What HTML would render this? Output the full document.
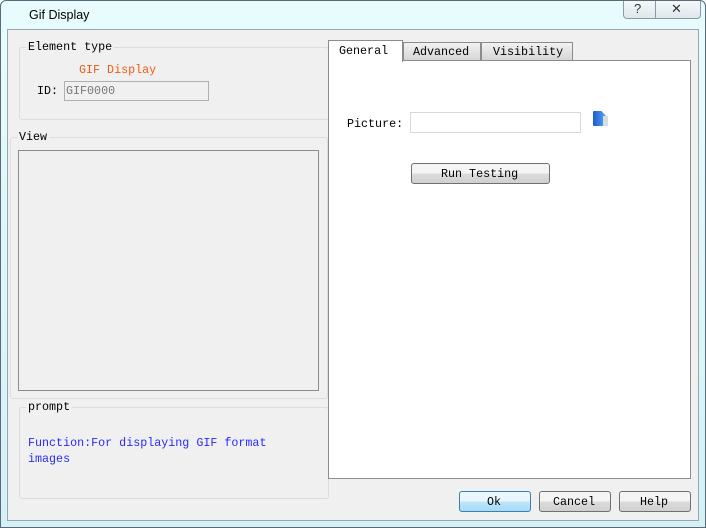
<html><head><style>
body{margin:0;width:706px;height:528px;background:#fff;position:relative;overflow:hidden;font-family:"Liberation Mono","Noto Sans CJK SC",monospace;font-size:11.7px;color:#000}
div{position:absolute;box-sizing:border-box}
.t{white-space:nowrap;line-height:14px}
</style></head><body>
<div style="left:0;top:0;width:706px;height:528px;border:1px solid #5a6a78;border-radius:6px 6px 0 0;background:linear-gradient(#e8fcfe,#d4f1f6)"></div>
<div class="t" style="left:29px;top:8px;font-family:'Liberation Sans',sans-serif;font-size:12.5px">Gif Display</div>
<div style="left:623px;top:1px;width:78px;height:18px;border:1px solid #8a99a6;border-top:none;border-radius:0 0 4px 4px;background:linear-gradient(#f4f8fa,#dfe8ec)"></div>
<div style="left:655px;top:1px;width:1px;height:17px;background:#8a99a6"></div>
<div class="t" style="left:634px;top:2px;font-family:'Liberation Sans';font-size:13px;color:#333">?</div>
<div class="t" style="left:671px;top:2px;font-family:'Liberation Sans';font-size:13px;color:#333">✕</div>
<div style="left:7px;top:29px;width:692px;height:492px;background:#f0f0f0;border:1px solid #9aa5ad"></div>
<!-- element type -->
<div style="left:19px;top:47px;width:310px;height:73px;border:1px solid #dcdcdc;border-radius:3px"></div>
<div class="t" style="left:26px;top:40px;background:#f0f0f0;padding:0 2px">Element type</div>
<div class="t" style="left:79px;top:63px;color:#f05a14">GIF Display</div>
<div class="t" style="left:37px;top:84px">ID:</div>
<div style="left:64px;top:81px;width:145px;height:20px;border:1px solid #b0b0b0;background:#f0f0f0"></div>
<div class="t" style="left:66px;top:84px;color:#777">GIF0000</div>
<!-- view -->
<div style="left:10px;top:137px;width:318px;height:262px;border:1px solid #dcdcdc;border-radius:3px"></div>
<div class="t" style="left:17px;top:130px;background:#f0f0f0;padding:0 2px">View</div>
<div style="left:18px;top:150px;width:301px;height:241px;border:1px solid #8c8c8c"></div>
<!-- prompt -->
<div style="left:19px;top:407px;width:310px;height:92px;border:1px solid #dcdcdc;border-radius:3px"></div>
<div class="t" style="left:26px;top:400px;background:#f0f0f0;padding:0 2px">prompt</div>
<div class="t" style="left:28px;top:436px;color:#2a2aff;line-height:15.5px">Function:For displaying GIF format<br>images</div>
<!-- tabs -->
<div style="left:328px;top:60px;width:363px;height:419px;background:#fff;border:1px solid #8c8c8c"></div>
<div style="left:403px;top:42px;width:78px;height:19px;border:1px solid #8c8c8c;background:linear-gradient(#f2f2f2,#d6d6d6)"></div>
<div style="left:481px;top:42px;width:92px;height:19px;border:1px solid #8c8c8c;background:linear-gradient(#f2f2f2,#d6d6d6)"></div>
<div style="left:328px;top:40px;width:75px;height:22px;border:1px solid #8c8c8c;border-bottom:none;background:#fff"></div>
<div class="t" style="left:339px;top:44px">General</div>
<div class="t" style="left:413px;top:45px">Advanced</div>
<div class="t" style="left:493px;top:45px">Visibility</div>
<div class="t" style="left:347px;top:117px">Picture:</div>
<div style="left:410px;top:112px;width:171px;height:21px;border:1px solid #d8d8d8;background:#fff"></div>
<div style="left:593px;top:111px;width:14px;height:15px;background:linear-gradient(90deg,#1a5fd0,#5fa8f0);border-radius:1px;clip-path:polygon(0 0,60% 0,100% 40%,100% 100%,0 100%)"></div>
<div style="left:603px;top:116px;width:5px;height:10px;background:#d8dde2"></div>
<div style="left:411px;top:163px;width:139px;height:21px;border:1px solid #707070;border-radius:3px;background:linear-gradient(#f4f4f4 50%,#dcdcdc 50%,#d0d0d0)"></div>
<div class="t" style="left:441px;top:167px">Run Testing</div>
<!-- buttons -->
<div style="left:459px;top:491px;width:72px;height:21px;border:1px solid #3c7fb1;border-radius:3px;background:linear-gradient(#eaf6fd 50%,#bee6fd 50%,#a7d9f5)"></div>
<div class="t" style="left:487px;top:495px">Ok</div>
<div style="left:539px;top:491px;width:72px;height:21px;border:1px solid #707070;border-radius:3px;background:linear-gradient(#f4f4f4 50%,#dcdcdc 50%,#d0d0d0)"></div>
<div class="t" style="left:553px;top:495px">Cancel</div>
<div style="left:619px;top:491px;width:72px;height:21px;border:1px solid #707070;border-radius:3px;background:linear-gradient(#f4f4f4 50%,#dcdcdc 50%,#d0d0d0)"></div>
<div class="t" style="left:640px;top:495px">Help</div>
</body></html>
